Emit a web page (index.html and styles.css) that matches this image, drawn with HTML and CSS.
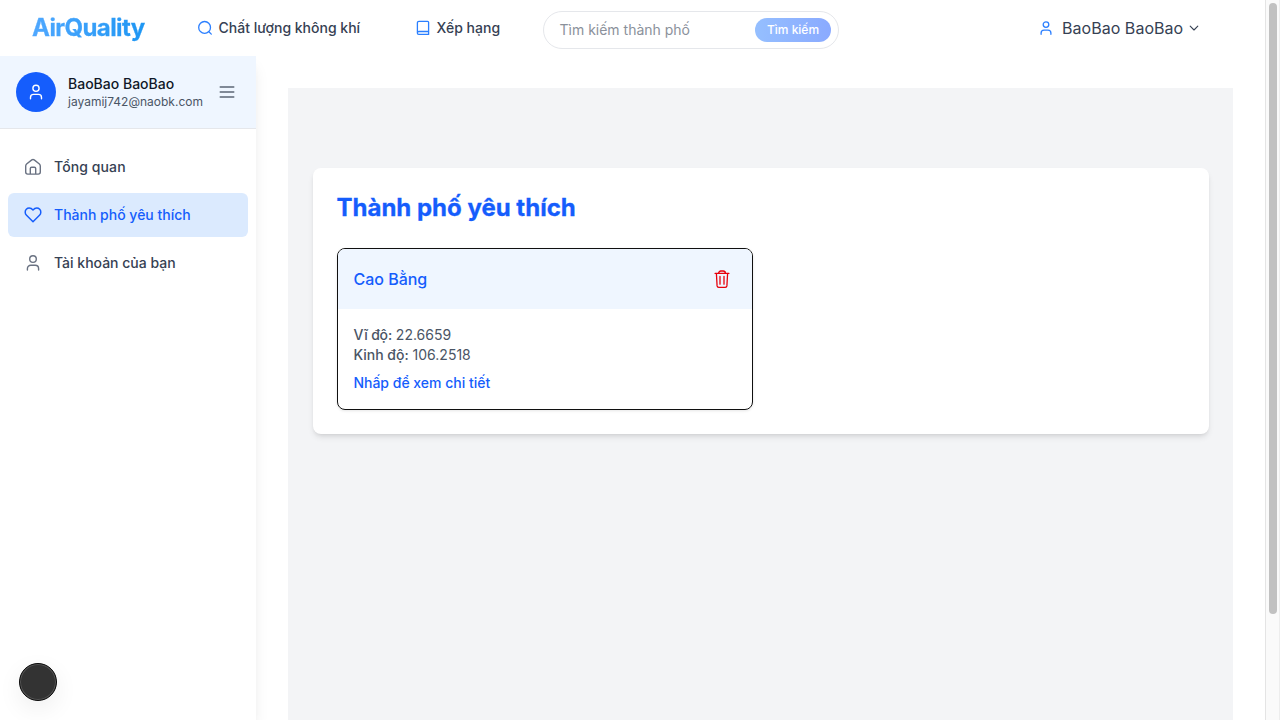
FILE: index.html
```html
<!DOCTYPE html>
<html lang="vi">
<head>
<meta charset="utf-8">
<title>AirQuality</title>
<link rel="stylesheet" href="styles.css">
</head>
<body>
<div class="app">
  <div class="page">
    <header class="topbar">
      <div class="logo">AirQuality</div>
      <a class="nav nav-air"><svg class="icon" viewBox="0 0 16 16"><circle cx="7.6" cy="7.4" r="5.9"/><path d="M11.9 11.7 14.3 14.1"/></svg>Chất lượng không khí</a>
      <a class="nav nav-rank"><svg class="icon" viewBox="0 0 16 16"><path d="M13.6 11.5V2.3a1 1 0 0 0-1-1H3.9A1.5 1.5 0 0 0 2.4 2.8v10.3M13.6 11.5H3.8a1.4 1.4 0 0 0 0 2.9h9.8z"/></svg>Xếp hạng</a>
      <div class="search"><span class="placeholder">Tìm kiếm thành phố</span><span class="search-btn">Tìm kiếm</span></div>
      <div class="account"><svg class="icon" viewBox="0 0 16 16"><circle cx="8" cy="4.6" r="2.8"/><path d="M3.1 14.3v-1.2a2.9 2.9 0 0 1 2.9-2.9h4a2.9 2.9 0 0 1 2.9 2.9v1.2"/></svg><span class="account-name">BaoBao BaoBao</span><svg class="chevron" viewBox="0 0 10 10"><path d="M1.2 3.2 5 7 8.8 3.2"/></svg></div>
    </header>
    <div class="body">
      <aside class="sidebar">
        <div class="profile">
          <div class="avatar"><svg class="avatar-icon" viewBox="0 0 16 16"><circle cx="8" cy="4.3" r="3.1"/><path d="M2.5 14.8v-1.4a3 3 0 0 1 3-3h5a3 3 0 0 1 3 3v1.4"/></svg></div>
          <div class="who"><div class="name">BaoBao BaoBao</div><div class="email">jayamij742@naobk.com</div></div>
          <svg class="menu" viewBox="0 0 16 16"><path d="M1.2 3h13.6M1.2 8h13.6M1.2 13h13.6"/></svg>
        </div>
        <nav class="items">
          <a class="item"><svg class="side-icon" viewBox="0 0 18 18"><path d="M7.8 1.9 2.6 6Q1.7 6.8 1.7 8V14.1a2 2 0 0 0 2 2h10.6a2 2 0 0 0 2-2V8q0-1.2-.9-2L10.2 1.9a2 2 0 0 0-2.4 0zM6.3 16.1V10.6a1.3 1.3 0 0 1 1.3-1.3h2.8a1.3 1.3 0 0 1 1.3 1.3v5.5"/></svg><span class="wide">Tổng quan</span></a>
          <a class="item active"><svg class="side-icon" viewBox="0 0 18 18"><path d="M9 15.7 2.5 9.3A4.4 4.4 0 0 1 1.2 6.2 4 4 0 0 1 5.2 2.1C6.8 2.1 7.9 2.7 9 3.9 10.1 2.7 11.2 2.1 12.8 2.1a4 4 0 0 1 4 4.1 4.4 4.4 0 0 1-1.3 3.1z"/></svg><span>Thành phố yêu thích</span></a>
          <a class="item"><svg class="side-icon" viewBox="0 0 18 18"><circle cx="9" cy="5.1" r="3.3"/><path d="M3.4 16.1v-1.4A3.4 3.4 0 0 1 6.8 11.3h4.4a3.4 3.4 0 0 1 3.4 3.4v1.4"/></svg><span>Tài khoản của bạn</span></a>
        </nav>
      </aside>
      <main class="main">
        <div class="panel">
          <section class="card">
            <h2 class="title">Thành phố yêu thích</h2>
            <article class="city">
              <div class="city-head"><span>Cao Bằng</span><svg class="trash" viewBox="0 0 18 20"><path d="M2.1 4.4h13.8M3.4 4.5l.7 12.4a1.6 1.6 0 0 0 1.6 1.4h6.6a1.6 1.6 0 0 0 1.6-1.4l.7-12.4M5.6 4.2a2.2 2.2 0 0 1 2.2-2.2h2.4a2.2 2.2 0 0 1 2.2 2.2M7 7.4v7.8M11 7.4v7.8"/></svg></div>
              <div class="city-body">
                <div><b class="tight">Vĩ độ:</b> 22.6659</div>
                <div><b>Kinh độ:</b> 106.2518</div>
                <a class="detail">Nhấp để xem chi tiết</a>
              </div>
            </article>
          </section>
        </div>
      </main>
    </div>
  </div>
  <div class="scrollbar"><div class="thumb"></div></div>
  <div class="bubble"></div>
</div>
</body>
</html>
```
FILE: styles.css
```css
* { box-sizing: border-box; }
body { margin: 0; font-family: Inter, "Noto Sans", sans-serif; color: #364153; background: #fff; }
svg { fill: none; stroke: currentColor; stroke-linecap: round; stroke-linejoin: round; flex: none; }
.app { display: flex; width: 1280px; height: 720px; overflow: hidden; position: relative; }
.page { flex: 1; display: flex; flex-direction: column; }
.topbar { height: 56px; display: flex; align-items: center; padding-left: 32px; flex: none; }
.logo { width: 165px; font-size: 24px; line-height: 32px; font-weight: 700; letter-spacing: -0.6px; }
.logo { color: transparent; background: linear-gradient(90deg, #50a8ff 0, #1d96f3 115px); background-clip: text; -webkit-background-clip: text; -webkit-text-stroke: 0.3px transparent; }
.nav { display: flex; align-items: center; gap: 5.6px; font-size: 14px; font-weight: 500; line-height: 20px; white-space: nowrap; }
.icon { width: 16px; height: 16px; color: #2b7fff; stroke-width: 1.3; }
.nav-air { width: 218px; }
.nav-rank { width: 128px; }
.search { width: 296px; height: 38px; margin-top: 4px; border: 1px solid #e5e7eb; border-radius: 19px; display: flex; align-items: center; justify-content: space-between; padding: 0 7px 0 15.5px; }
.placeholder { font-size: 14px; line-height: 20px; color: #8b919b; }
.search-btn { width: 76px; height: 24px; line-height: 24px; border-radius: 12px; text-align: center; font-size: 12px; font-weight: 500; color: #fff; background: linear-gradient(90deg, #95bfff, #8aaaff); }
.account { display: flex; align-items: center; margin-left: 199px; font-size: 16px; line-height: 24px; white-space: nowrap; }
.account-name { margin-left: 8px; width: 121px; letter-spacing: 0.04px; }
.chevron { width: 10px; height: 10px; margin-left: 6px; stroke-width: 1.1; }
.body { flex: 1; display: flex; min-height: 0; }
.sidebar { width: 256px; flex: none; background: #fff; box-shadow: 0 10px 15px -3px rgba(0,0,0,.1), 0 4px 6px -4px rgba(0,0,0,.1); clip-path: inset(0 -20px 0 0); }
.profile { height: 73px; background: #eff6ff; border-bottom: 1px solid #e5e7eb; display: flex; align-items: center; padding: 0 21px 0 16px; }
.avatar { width: 40px; height: 40px; border-radius: 50%; background: #155dfc; color: #fff; display: grid; place-items: center; }
.avatar-icon { width: 16px; height: 16px; stroke-width: 1.4; }
.who { margin-left: 12px; width: 151px; }
.name { font-size: 14px; line-height: 20px; font-weight: 500; color: #101828; }
.email { font-size: 12px; line-height: 16px; color: #4a5565; }
.menu { width: 16px; height: 16px; color: #5c6675; stroke-width: 1.4; }
.items { padding: 16px 8px; display: flex; flex-direction: column; gap: 4px; }
.item { height: 44px; border-radius: 6px; padding-left: 16px; display: flex; align-items: center; gap: 12px; font-size: 14px; line-height: 20px; font-weight: 500; }
.item span { padding-bottom: 1px; }
.wide { letter-spacing: 0.1px; }
.side-icon { width: 18px; height: 18px; color: #6a7282; stroke-width: 1.4; }
.active { background: #dbeafe; color: #155dfc; }
.active .side-icon { color: #155dfc; stroke-width: 1.5; }
.main { flex: 1; padding: 32px 32px 0; }
.panel { height: 100%; background: #f3f4f6; padding: 80px 24px 0 25px; }
.card { height: 266px; padding: 24px; background: #fff; border-radius: 8px; box-shadow: 0 4px 6px -1px rgba(0,0,0,.1), 0 2px 4px -2px rgba(0,0,0,.1); }
.title { margin: 0 0 24px -0.5px; font-size: 24px; line-height: 32px; font-weight: 700; color: #155dfc; -webkit-text-stroke: 0.3px #155dfc; }
.city { width: 416px; height: 162px; border: 1px solid #101010; border-radius: 8px; overflow: hidden; box-shadow: 0 1px 3px rgba(0,0,0,.1); }
.city-head { height: 60px; background: #eff6ff; display: flex; align-items: center; justify-content: space-between; padding: 0 21px 0 15.4px; font-size: 16px; font-weight: 500; color: #155dfc; }
.trash { width: 18px; height: 20px; color: #e7000b; stroke-width: 1.3; }
.city-body { padding: 16px 15.4px; font-size: 14px; line-height: 20px; color: #4a5565; }
.city-body b { font-weight: 500; }
.tight { letter-spacing: -0.2px; }
.detail { display: block; margin-top: 8px; font-weight: 500; color: #155dfc; }
.scrollbar { width: 15px; background: #fafafa; border-left: 1px solid #e4e4e4; border-right: 1px solid #ededed; padding: 3px 2px 0 3px; }
.thumb { width: 8px; height: 611px; border-radius: 4px; background: #c1c1c1; }
.bubble { position: absolute; left: 19px; top: 663px; width: 38px; height: 38px; border-radius: 50%; background: #333; border: 1px solid #0a0a0a; box-shadow: inset 0 0 0 1px #555, 0 8px 24px rgba(0,0,0,.07); }
```
